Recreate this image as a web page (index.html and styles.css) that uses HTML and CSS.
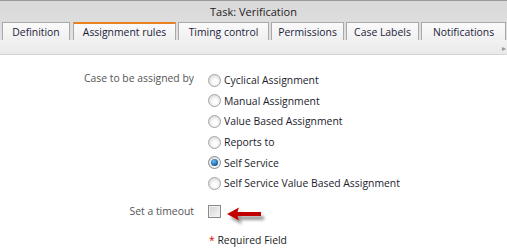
FILE: index.html
```html
<!DOCTYPE html>
<html lang="en">
<head>
  <meta charset="UTF-8" />
  <title>Task: Verification</title>
  <link rel="stylesheet" href="styles.css">
</head>
<body>

  <div class="panel">
    <div class="title">Task: Verification</div>
    <div class="tabs">
      <span class="tab t-def">Definition</span>
      <span class="tab t-assign active">Assignment rules</span>
      <span class="tab t-timing">Timing control</span>
      <span class="tab t-perm">Permissions</span>
      <span class="tab t-labels">Case Labels</span>
      <span class="tab t-notif">Notifications</span>
    </div>
    <div class="subbar"><span class="more">&#9656;</span></div>
  </div>

  <div class="form">
    <div class="row">
      <div class="label">Case to be assigned by</div>
      <div class="options">
        <label class="option"><span class="radio"></span>Cyclical Assignment</label>
        <label class="option"><span class="radio"></span>Manual Assignment</label>
        <label class="option"><span class="radio"></span>Value Based Assignment</label>
        <label class="option"><span class="radio"></span>Reports to</label>
        <label class="option"><span class="radio checked"></span>Self Service</label>
        <label class="option"><span class="radio"></span>Self Service Value Based Assignment</label>
      </div>
    </div>

    <div class="row timeout">
      <div class="label">Set a timeout</div>
      <div class="options">
        <span class="checkbox"></span>
        <svg class="arrow" width="46" height="24" viewBox="0 0 46 24">
          <defs>
            <filter id="sh" x="-20%" y="-40%" width="150%" height="200%">
              <feGaussianBlur in="SourceAlpha" stdDeviation="1.8" />
              <feOffset dx="3" dy="4" result="b" />
              <feComponentTransfer><feFuncA type="linear" slope="0.4" /></feComponentTransfer>
              <feMerge><feMergeNode /><feMergeNode in="SourceGraphic" /></feMerge>
            </filter>
          </defs>
          <path d="M1 8 L13 1.5 L11.5 6 L35 6 L35 10 L11.5 10 L13 14.5 Z" fill="#c20000" filter="url(#sh)" />
        </svg>
      </div>
    </div>

    <div class="required"><span class="star">*</span> Required Field</div>
  </div>

</body>
</html>
```

FILE: styles.css
```css
body {
  margin: 0;
  padding: 0;
  background: #fff;
  font-family: 'Open Sans', sans-serif;
  font-size: 10.4px;
  color: #222;
}

.panel {
  border-top: 1px solid #9a9a9a;
  background: linear-gradient(#d9d9d9, #e4e4e4);
}

.title {
  height: 21px;
  line-height: 21px;
  text-align: center;
  color: #222;
  font-size: 11px;
}

.tabs {
  display: flex;
  gap: 2px;
  padding-left: 2px;
  height: 18px;
}

.tab {
  box-sizing: border-box;
  height: 18px;
  padding-top: 2px;
  text-align: center;
  background: linear-gradient(#fafafa, #f0f0f0);
  border: 1px solid #a9a9a9;
  border-bottom: none;
  color: #1c1c3a;
}

.tab.active {
  border-top: 2px solid #e8821e;
  padding-top: 1px;
}

.t-def { width: 68px; }
.t-assign { width: 103px; margin-left: 1px; }
.t-timing { width: 91px; }
.t-perm { width: 73px; }
.t-labels { width: 73px; }
.t-notif { width: 85px; }

.subbar {
  height: 14px;
  background: linear-gradient(#f2f2f2, #e9e9e9);
  border-bottom: 1px solid #d5d5d5;
  text-align: right;
}

.subbar .more {
  color: #999;
  font-size: 8px;
  line-height: 14px;
  margin-right: 1px;
}

.form {
  padding-top: 15px;
}

.row {
  display: flex;
}

.label {
  width: 194px;
  text-align: right;
  color: #555;
  padding-top: 1px;
}

.options {
  display: flex;
  flex-direction: column;
  padding-left: 14px;
}

.option {
  display: flex;
  align-items: center;
  height: 20.6px;
  color: #1c1c2c;
}

.radio {
  box-sizing: border-box;
  width: 13px;
  height: 13px;
  border-radius: 50%;
  border: 1px solid #a4a4a4;
  background: radial-gradient(circle at 55% 60%, #fdfdfd 25%, #d6d6d6 85%);
  margin-right: 3px;
  position: relative;
}

.radio.checked {
  border-color: #8a8a8a;
}

.radio.checked::after {
  content: "";
  position: absolute;
  left: 2px;
  top: 2px;
  width: 7px;
  height: 7px;
  border-radius: 50%;
  background: radial-gradient(circle at 40% 35%, #6cc0f2, #0b4f99 75%);
}

.timeout {
  margin-top: 10px;
  height: 14px;
  align-items: center;
}

.timeout .label {
  padding-top: 0;
}

.timeout .options {
  flex-direction: row;
  align-items: flex-start;
  height: 14px;
}

.checkbox {
  box-sizing: border-box;
  width: 13px;
  height: 13px;
  margin-top: 1px;
  border: 1px solid #8a8a8a;
  background: linear-gradient(135deg, #d4d4d4, #f6f6f6);
  box-shadow: inset 0 0 0 1px #f0f0f0;
}

.arrow {
  margin-left: 5px;
  margin-top: 2px;
}

.required {
  padding-left: 209px;
  margin-top: 15px;
  color: #222;
}

.required .star {
  color: #e00000;
}
```
